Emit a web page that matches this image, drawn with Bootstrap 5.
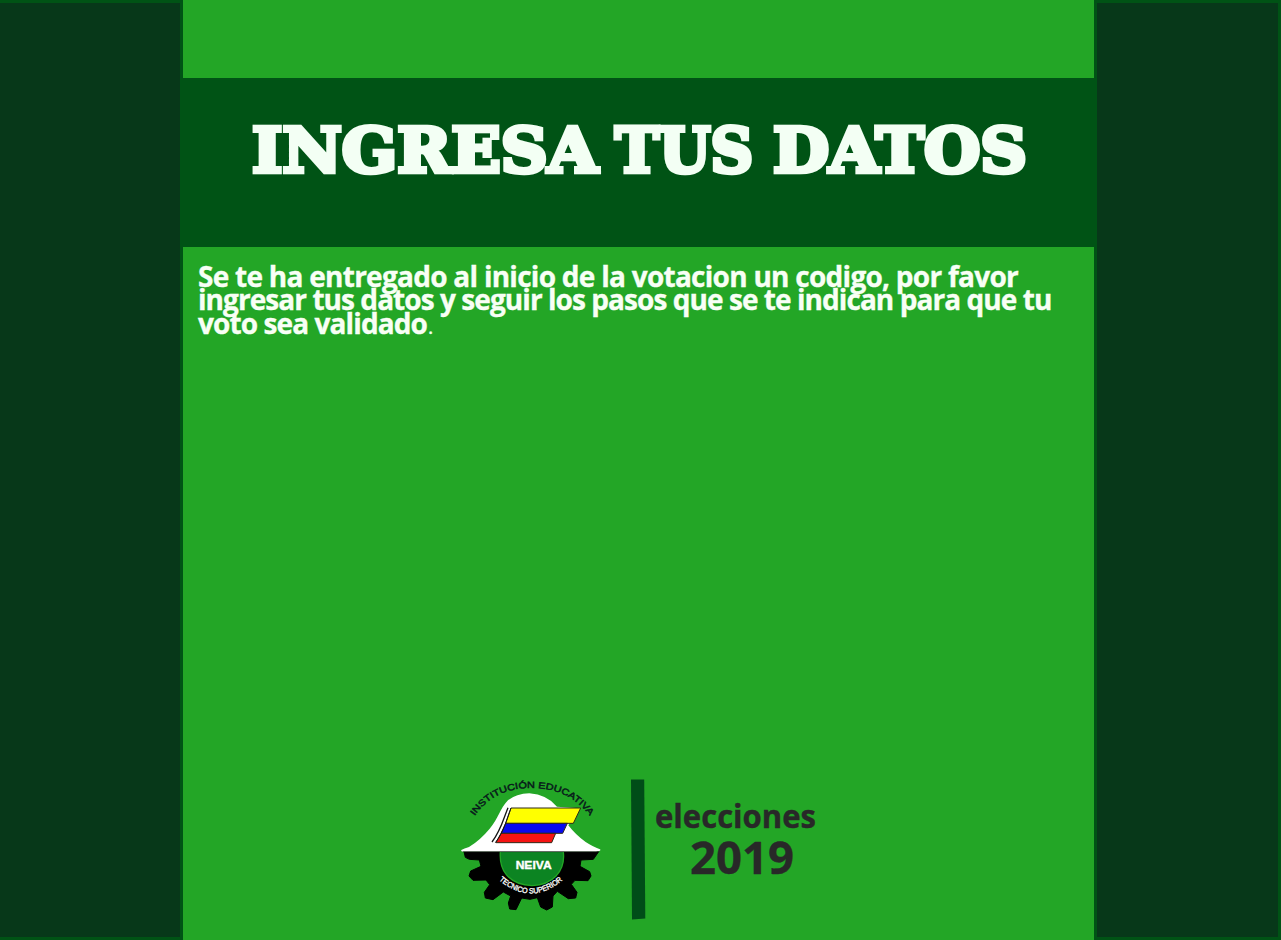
<!DOCTYPE html>
<html lang="es">
<head>
<meta charset="utf-8">
<meta name="viewport" content="width=device-width, initial-scale=1">
<title>Ingresa tus datos</title>
<link href="https://cdn.jsdelivr.net/npm/bootstrap@5.3.0/dist/css/bootstrap.min.css" rel="stylesheet">
<style>
body{background:#23a626;font-family:"Open Sans","Noto Sans",sans-serif}
.page{height:940px}
.side{background:#073819;border:3px solid #005315}
.side-left{width:183px;border-left:0}
.side-right{width:187px}
.banner{margin-top:78px;height:169px;background:#005315}
.intro{padding:17.5px 0 0 15px;font-size:28px;line-height:23.7px;font-weight:700;color:#f8fff5;-webkit-text-stroke:.35px #f8fff5}
.intro span{display:block;white-space:nowrap}
.l1{letter-spacing:-.73px}.l2{letter-spacing:-.94px}.l3{letter-spacing:-.9px}
.intro small{font-size:20px;font-weight:400;margin-left:1px}
.brand{padding-left:267px;height:170px}
svg text{white-space:pre}
</style>
</head>
<body class="overflow-hidden">
<div class="page d-flex">
  <aside class="side side-left flex-shrink-0"></aside>
  <main class="d-flex flex-column flex-grow-1">
    <header class="banner flex-shrink-0">
      <h1 class="m-0">
        <svg class="d-block" width="911" height="168" viewBox="183 78 911 168" font-family="DejaVu Serif, serif" font-weight="700" font-size="61.5" fill="#f3fff4" stroke="#f3fff4" stroke-width="4.6">
          <text x="252" y="171.9" textLength="346" lengthAdjust="spacingAndGlyphs">INGRESA</text>
          <text x="615" y="171.9" textLength="138" lengthAdjust="spacingAndGlyphs">TUS</text>
          <text x="773" y="171.9" textLength="254" lengthAdjust="spacingAndGlyphs">DATOS</text>
        </svg>
      </h1>
    </header>
    <p class="intro m-0"><span class="l1">Se te ha entregado al inicio de la votacion un codigo, por favor</span><span class="l2">ingresar tus datos y seguir los pasos que se te indican para que tu</span><span class="l3">voto sea validado<small>.</small></span></p>
    <footer class="brand mt-auto d-flex flex-shrink-0">
      <svg width="160" height="150" viewBox="0 0 480 450" font-family="Liberation Sans, Arial, sans-serif">
        <defs>
          <path id="arcTop" d="M74 138Q132 54 244 54Q355 54 416 134"/>
          <path id="arcLow" d="M147 330Q242 412 342 328"/>
        </defs>
        <path fill="#000" stroke="#000" stroke-width="3" stroke-linejoin="round" d="M42 245L46 262L58 268L88 270L93 289L62 303L57 318L69 331L108 330L119 344L103 367L106 384L129 389L160 366L182 378L175 399L179 417L198 419L215 384L240 388L262 383L272 411L290 420L307 411L309 378L322 364L355 386L377 384L381 367L364 343L375 331L414 332L423 318L419 305L390 289L393 270L430 268L446 245Z"/>
        <path fill="#0c8422" d="M151 246H340Q345 288 319 317Q292 345 246 347Q194 345 169 314Q148 288 151 246Z"/>
        <path fill="none" stroke="#23a626" stroke-width="4" d="M151 246Q148 288 169 314Q194 345 246 347Q292 345 319 317Q345 288 340 246"/>
        <path fill="#fff" d="M34 240Q42 235 57 231Q91 210 119 176C146 144 149 117 174 91Q199 71 238 70Q291 74 321 110L389 115L355 166Q378 196 407 216Q432 232 450 238Q455 243 438 245H38Q32 243 34 240Z"/>
        <g stroke="#302b18" stroke-width="3">
          <path fill="#ff0" d="M183 114H392L370 160H167Z"/>
          <path fill="#0909ed" d="M167 160H352L338 190H153Z"/>
          <path fill="#f51313" d="M153 190H317L305 218H138Z"/>
        </g>
        <path d="M174 113C160 147 154 179 126 216" fill="none" stroke="#151515" stroke-width="4"/>
        <path d="M183 114C169 151 162 184 136 218" fill="none" stroke="#151515" stroke-width="3"/>
        <path d="M38 245H444" stroke="#182918" stroke-width="2"/>
        <text font-size="27" fill="#081b1b" stroke="#081b1b" stroke-width="1.4"><textPath href="#arcTop" textLength="400" lengthAdjust="spacingAndGlyphs">INSTITUCIÓN EDUCATIVA</textPath></text>
        <text x="197" y="297" font-size="30" font-weight="700" fill="#fff" stroke="#fff" textLength="108" lengthAdjust="spacingAndGlyphs">NEIVA</text>
        <text font-size="23" fill="#fff" stroke="#fff" stroke-width="1"><textPath href="#arcLow" textLength="211" lengthAdjust="spacingAndGlyphs">TECNICO SUPERIOR</textPath></text>
      </svg>
      <svg width="220" height="160" viewBox="610 770 220 160" font-family="Open Sans, Noto Sans, sans-serif" font-weight="700" fill="#282828" stroke="#282828" stroke-width=".4">
        <path d="M631 779.5H644.2L645.3 918.5L632 919.5Z" fill="#004d18" stroke="none"/>
        <text x="655" y="827.5" font-size="33" textLength="161" lengthAdjust="spacingAndGlyphs">elecciones</text>
        <text x="690" y="873.5" font-size="45.5" textLength="104" lengthAdjust="spacingAndGlyphs">2019</text>
      </svg>
    </footer>
  </main>
  <aside class="side side-right flex-shrink-0"></aside>
</div>
<script src="https://cdn.jsdelivr.net/npm/bootstrap@5.3.0/dist/js/bootstrap.bundle.min.js"></script>
</body>
</html>
